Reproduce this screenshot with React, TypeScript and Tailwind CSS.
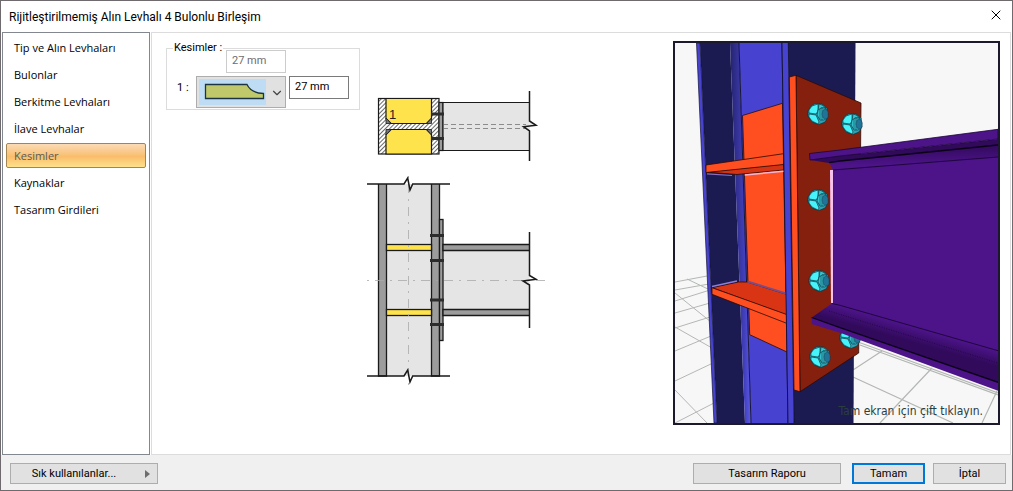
import React, { useState } from 'react';
import { X, ChevronDown } from 'lucide-react';

const menuItems = [
  'Tip ve Alın Levhaları',
  'Bulonlar',
  'Berkitme Levhaları',
  'İlave Levhalar',
  'Kesimler',
  'Kaynaklar',
  'Tasarım Girdileri',
];

const bolts = [
  { x: 818, y: 114 },
  { x: 852, y: 124 },
  { x: 818, y: 200 },
  { x: 819, y: 281 },
  { x: 820, y: 357 },
];

const Bolt: React.FC<{ x: number; y: number }> = ({ x, y }) => (
  <g transform={`translate(${x} ${y})`} stroke="#062a33" strokeWidth="0.6" strokeLinejoin="round">
    <path d="M-7 -8L-3 -10.5L4 -10L9 -6L10 3L7 8L1 10.5L-6 8L-10 2L-10 -3Z" fill="#2ba3b6" />
    <path d="M-6 -8L0 -10L0 -3L-2 0L-9 -1L-9 -4Z" fill="#47f3fb" />
    <path d="M-9 0L-2 1L1 8L0 10L-6 7L-9 3Z" fill="#47f3fb" />
    <path d="M1 -10L4 -9L8 -6L3 -6L0 -3Z" fill="#37c3d0" />
    <path d="M-1 1L0 -4L3 -6L7 -6L10 -1L9 4L6 6L2 6Z" fill="#36bdcb" />
    <path d="M2 -5V5M4 -6V6" fill="none" strokeWidth="0.5" />
    <path d="M5 -4L8 -5L10 -2V3L8 5L5 4L4 0Z" fill="#1f7498" stroke="#164f68" />
  </g>
);

const SectionDrawing: React.FC = () => (
  <svg
    viewBox="366 88 186 308"
    className="w-[186px] h-[308px] shrink-0"
    role="img"
    aria-label="Birleşim kesiti">
    <defs>
      <pattern
        id="hatch"
        width="3"
        height="3"
        patternUnits="userSpaceOnUse"
        patternTransform="rotate(45)">
        <rect width="3" height="3" fill="#fff" />
        <line x1="0.5" y1="0" x2="0.5" y2="3" stroke="#444" strokeWidth="0.8" />
      </pattern>
    </defs>

    {/* plan */}
    <g stroke="#1a1a1a" strokeWidth="1.2">
      <rect x="378.5" y="98.5" width="60.5" height="55.5" fill="url(#hatch)" />
      <path d="M386 98.5H431.5V118.5L426.5 123.5H391L386 118.5Z" fill="#ffe34d" />
      <path d="M386 154H431.5V134.5L426.5 129.5H391L386 134.5Z" fill="#ffe34d" />
      <path
        d="M386 118V123.5H391ZM431.5 118V123.5H426.5ZM386 135V129.5H391ZM431.5 135V129.5H426.5Z"
        fill="#777"
        strokeWidth="0.8"
      />
      <rect x="439" y="102.5" width="4" height="48" fill="#9c9c9c" />
      <path d="M529.5 102.5H443V150.5H529.5" fill="#e5e5e5" />
      <path
        d="M443 124.5H526M443 128.5H526"
        stroke="#666"
        strokeWidth="0.7"
        strokeDasharray="5 3"
      />
      <path d="M431 114H444M431 138.5H444" stroke="#2c2c2c" strokeWidth="3" />
      <path
        d="M529.5 121L536 125.3L523.5 126.7L529.5 131Z"
        fill="#e5e5e5"
        stroke="none"
      />
      <path d="M529.5 91V121L536 125.3L523.5 126.7L529.5 131V161" fill="none" strokeWidth="1.5" />
    </g>
    <text
      x="389"
      y="119"
      fontSize="13"
      fill="#222"
      className="font-['Liberation_Sans',sans-serif]">
      1
    </text>

    {/* elevation */}
    <g stroke="#1a1a1a" strokeWidth="1.3">
      <rect x="386" y="184" width="45.5" height="192" fill="#e5e5e5" stroke="none" />
      <path d="M378.5 184V376H386.5V184" fill="#9c9c9c" />
      <path d="M431.5 184V376H439.5V184" fill="#9c9c9c" />
      <rect x="443" y="250" width="86.5" height="60" fill="#e5e5e5" stroke="none" />
      <rect x="439.5" y="219.5" width="3.5" height="121" fill="#9c9c9c" />
      <rect x="386.5" y="244.5" width="45" height="6" fill="#ffe34d" />
      <rect x="386.5" y="309.5" width="45" height="6" fill="#ffe34d" />
      <path d="M529.5 244.5H443V250.5H529.5M529.5 309.5H443V315.5H529.5" fill="#9c9c9c" />
      <path
        d="M430 235.5H444M430 260.5H444M430 300H444M430 324.5H444"
        stroke="#2c2c2c"
        strokeWidth="3"
      />
      <path
        d="M367 280.5H550M408.5 176V386"
        stroke="#aaa"
        strokeWidth="0.8"
        strokeDasharray="2 6 9 6"
      />
      <path d="M367 184H404L407.7 178L410 190L412.7 184H450" fill="none" strokeWidth="1.5" />
      <path d="M367 376H404L407.7 370L410 382L412.7 376H450" fill="none" strokeWidth="1.5" />
      <path d="M529.5 232V275.5L536 279.3L523 281L529.5 285V328" fill="none" strokeWidth="1.5" />
    </g>
  </svg>
);

const ModelView: React.FC = () => (
  <svg viewBox="675 43 323 380" className="block w-full" role="img" aria-label="3B model">
    <defs>
      <linearGradient id="fillet">
        <stop offset="0" stopColor="#24236e" />
        <stop offset="0.7" stopColor="#4340bd" />
        <stop offset="1" stopColor="#5d5aec" />
      </linearGradient>
      <linearGradient id="topFillet" x1="0" y1="0" x2="0.06" y2="1">
        <stop offset="0.2" stopColor="#360b64" />
        <stop offset="0.8" stopColor="#4c1488" />
      </linearGradient>
      <linearGradient
        id="bottomFillet"
        gradientUnits="userSpaceOnUse"
        x1="902"
        y1="324"
        x2="898"
        y2="338">
        <stop offset="0" stopColor="#4c1488" />
        <stop offset="1" stopColor="#310a5c" />
      </linearGradient>
    </defs>
    <rect x="675" y="43" width="323" height="380" fill="#f7f7f7" />

    {/* floor grid */}
    <path
      d="M675 282L707 276M675 290L709 284M675 301L710 290M675 313L710 303M675 328L710 317M675 351L711 336M675 381L713 363M675 423L714 403M687 279L710 290M675 293L711 322M675 327L712 348M675 390L707 423"
      stroke="#b3b7b3"
      strokeWidth="1"
      fill="none"
    />
    <path
      d="M858 342L998 393M882 351L853 370M932 368L880 423M997 391L982 423M853 377L953 423M860 345L998 395"
      stroke="#b3b7b3"
      strokeWidth="1.2"
      fill="none"
    />

    {/* column */}
    <path d="M788 43H855.5L853.5 423H794Z" fill="#1b1b52" />
    <path d="M700 43H730L745 423H717Z" fill="#1b1b52" />
    <path d="M696.5 43H700L717 423H714Z" fill="#4743d0" stroke="#111133" strokeWidth="0.7" />
    <path d="M730 43H739L751 423H745Z" fill="url(#fillet)" />
    <path d="M739 43H782L788 423H751Z" fill="#4743d0" />
    <path d="M739 43L751 423M782 43L788 423" stroke="#0c0c28" strokeWidth="0.9" />

    {/* doubler plate and stiffeners */}
    <g stroke="#2a0a05" strokeWidth="0.8" strokeLinejoin="round">
      <path d="M742.5 115.5L782.5 103.3L787 352L749.7 334.7Z" fill="#ff4f20" />
      <path d="M706 172L783.5 164V170L737 174.5Z" fill="#d43413" />
      <path d="M706 165L783.5 153.7V164.5L706 172.5Z" fill="#ff4f20" />
      <path d="M744.7 175L783.7 171.3" stroke="#f6b3cf" strokeWidth="1.5" />
      <path d="M707 173.8L732 175.5" stroke="#8b70c0" strokeWidth="1.2" />
      <path d="M712 287.7L738.3 282H747.3L786.7 294.3V315Z" fill="#d93515" />
      <path d="M712 287.7L786.7 314.5V323.3L712 294.3Z" fill="#ff4f20" />
      <path d="M747.5 281.5L786 293.5" stroke="#794c85" strokeWidth="2" />
      <path d="M712 286.5L737 281" stroke="#8d7ddc" strokeWidth="1.5" />
    </g>
    <path d="M782 43H788.3L794 423H788Z" fill="#4743d0" />
    <path d="M782 43L788 423M788.3 43L794 423" stroke="#0c0c28" strokeWidth="0.8" />

    {/* end plate */}
    <g stroke="#2a0a05" strokeWidth="0.8" strokeLinejoin="round">
      <path d="M796 75.3L861 103L858.7 353L800 391.7Z" fill="#85200e" />
      <path d="M789.3 77L796 75.3L800 391.7L794 390Z" fill="#ff4f20" />
    </g>
    {bolts.map((bolt) => (
      <Bolt key={`${bolt.x}-${bolt.y}`} x={bolt.x} y={bolt.y} />
    ))}
    <Bolt x={850} y={338} />

    {/* beam */}
    <path d="M833 165L998 150V385L833 306Z" fill="#4c1488" />
    <path d="M829 162L998 145V157L833 170Z" fill="url(#topFillet)" />
    <path d="M833 170L998 157" stroke="#1c0538" strokeWidth="0.9" />
    <path d="M810 158L840 156L998 139V145L840 161L829 163L810 160Z" fill="#310a5c" />
    <path d="M829 162.7L840 161L998 145" fill="none" stroke="#0c0218" strokeWidth="1.3" />
    <path
      d="M809.5 153.5L840 150L998 129.3V139L840 156L810 160Z"
      fill="#4c1488"
      stroke="#1c0538"
      strokeWidth="0.8"
    />
    <path d="M830 170H833.5V303H831Z" fill="#f7c3ee" />
    <path d="M833.5 170V303" stroke="#2a0845" strokeWidth="0.8" />
    <path
      d="M811.7 317.5L831.7 303.5L840 305.3L998 350.7V382.3L840 327.7Z"
      fill="url(#bottomFillet)"
    />
    <path d="M831.7 303.5L840 305.3L998 350.7" fill="none" stroke="#1c0538" strokeWidth="0.9" />
    <path d="M829 311L998 363" stroke="#1c0538" strokeWidth="0.7" strokeDasharray="1 1.5" />
    <path
      d="M811.7 317.5L840 327.7L998 382.3V390.7L840 332.7L811.7 324Z"
      fill="#4c1488"
    />
    <path d="M811.7 317.5L840 327.7L998 382.3" fill="none" stroke="#0c0218" strokeWidth="1.3" />
  </svg>
);

const buttonClass =
  'h-[21px] border border-[#adadad] bg-[#e1e1e1] text-center leading-[18px] hover:bg-[#e5f1fb]';

const App: React.FC = () => {
  const [active, setActive] = useState('Kesimler');
  const [size, setSize] = useState('27 mm');

  return (
    <div className="flex min-h-screen flex-col border border-[#6e6a6e] bg-white font-['Roboto','Noto_Sans',sans-serif] text-[11px] text-black">
      <header className="flex h-[31px] shrink-0 items-center justify-between pl-2 pr-2">
        <h1 className="text-xs">Rijitleştirilmemiş Alın Levhalı 4 Bulonlu Birleşim</h1>
        <button type="button" aria-label="Kapat" className="-mt-1">
          <X size={16} strokeWidth={1.5} />
        </button>
      </header>

      <div className="flex grow gap-px px-px">
        <nav className="flex w-[148px] shrink-0 flex-col gap-0.5 border border-[#828790] px-[3px] py-0.5">
          {menuItems.map((item) => (
            <button
              key={item}
              type="button"
              onClick={() => setActive(item)}
              className={`h-[25px] rounded-[2px] border px-[7px] pt-0.5 text-left font-['Open_Sans','Noto_Sans',sans-serif] font-medium ${
                item === active
                  ? 'border-[#a48552] bg-linear-to-b from-[#fbdbb5] via-[#f9bd6c] via-55% to-[#fde18b] text-[#5a5a5a]'
                  : 'border-transparent'
              }`}>
              {item}
            </button>
          ))}
        </nav>

        <main className="flex grow items-start border border-[#dcdcdc] pl-3.5 pr-2.5 pt-2">
          <fieldset className="mt-[5px] w-[194px] shrink-0 border border-[#dcdcdc] pb-px pl-2 pr-2.5">
            <legend className="-ml-0.5 px-px leading-[4px]">Kesimler :</legend>
            <div className="flex flex-col gap-[3px]">
              <input
                aria-label="Varsayılan kesim"
                value="27 mm"
                disabled
                className="ml-[51px] h-[23px] w-[60px] border border-[#cccccc] px-[5px] pb-0.5 text-[#6d6d6d]"
              />
              <div className="flex items-start">
                <label htmlFor="cut" className="w-[21px] pt-1 pl-0.5">
                  1 :
                </label>
                <div className="relative">
                  <select
                    id="cut"
                    className="block h-8 w-[90px] appearance-none border border-[#adadad] bg-[#e1e1e1] text-transparent">
                    <option aria-label="Kavisli kesim" />
                  </select>
                  <svg
                    viewBox="0 0 67 26"
                    className="pointer-events-none absolute left-[3px] top-[3px] h-[26px] w-[67px]">
                    <rect width="67" height="26" fill="#bfdcf5" />
                    <path
                      d="M6.5 5.5H48Q52 14 64.5 14.500V19.500H6.500Z"
                      fill="#bfc96c"
                      stroke="#1c3442"
                      strokeWidth="1.3"
                    />
                  </svg>
                  <ChevronDown
                    size={14}
                    strokeWidth={2}
                    className="pointer-events-none absolute right-0.5 top-2.5 text-[#444]"
                  />
                </div>
                <input
                  aria-label="Kesim ölçüsü"
                  value={size}
                  onChange={(e) => setSize(e.target.value)}
                  className="ml-[3px] h-[23px] w-[60px] border border-[#7a7a7a] px-[5px] pb-0.5"
                />
              </div>
            </div>
          </fieldset>

          <div className="mt-[47px] grow pl-1.5">
            <SectionDrawing />
          </div>

          <div className="relative w-[327px] shrink-0 border-2 border-[#1a1a2c]">
            <ModelView />
            <p className="absolute bottom-1 right-[15px] font-['DejaVu_Sans_Condensed','DejaVu_Sans',sans-serif] text-xs leading-4 text-[#2b3d3d]">
              Tam ekran için çift tıklayın.
            </p>
          </div>
        </main>
      </div>

      <footer className="flex h-[35px] shrink-0 items-start bg-[#f0f0f0] pl-[9px] pr-1.5 pt-2">
        <button type="button" className={`relative w-[148px] pr-5 ${buttonClass}`}>
          Sık kullanılanlar...
          <svg viewBox="0 0 5 8" className="absolute right-[7px] top-[6px] h-2 w-[5px]">
            <path d="M0 0L5 4L0 8Z" fill="#6d6d6d" />
          </svg>
        </button>
        <button type="button" className={`ml-auto w-[148px] ${buttonClass}`}>
          Tasarım Raporu
        </button>
        <button
          type="button"
          className="ml-[11px] h-[21px] w-[73px] border-2 border-[#0078d7] bg-[#e1e1e1] leading-4">
          Tamam
        </button>
        <button type="button" className={`ml-2 w-[73px] ${buttonClass}`}>
          İptal
        </button>
      </footer>
    </div>
  );
};

export default App;
